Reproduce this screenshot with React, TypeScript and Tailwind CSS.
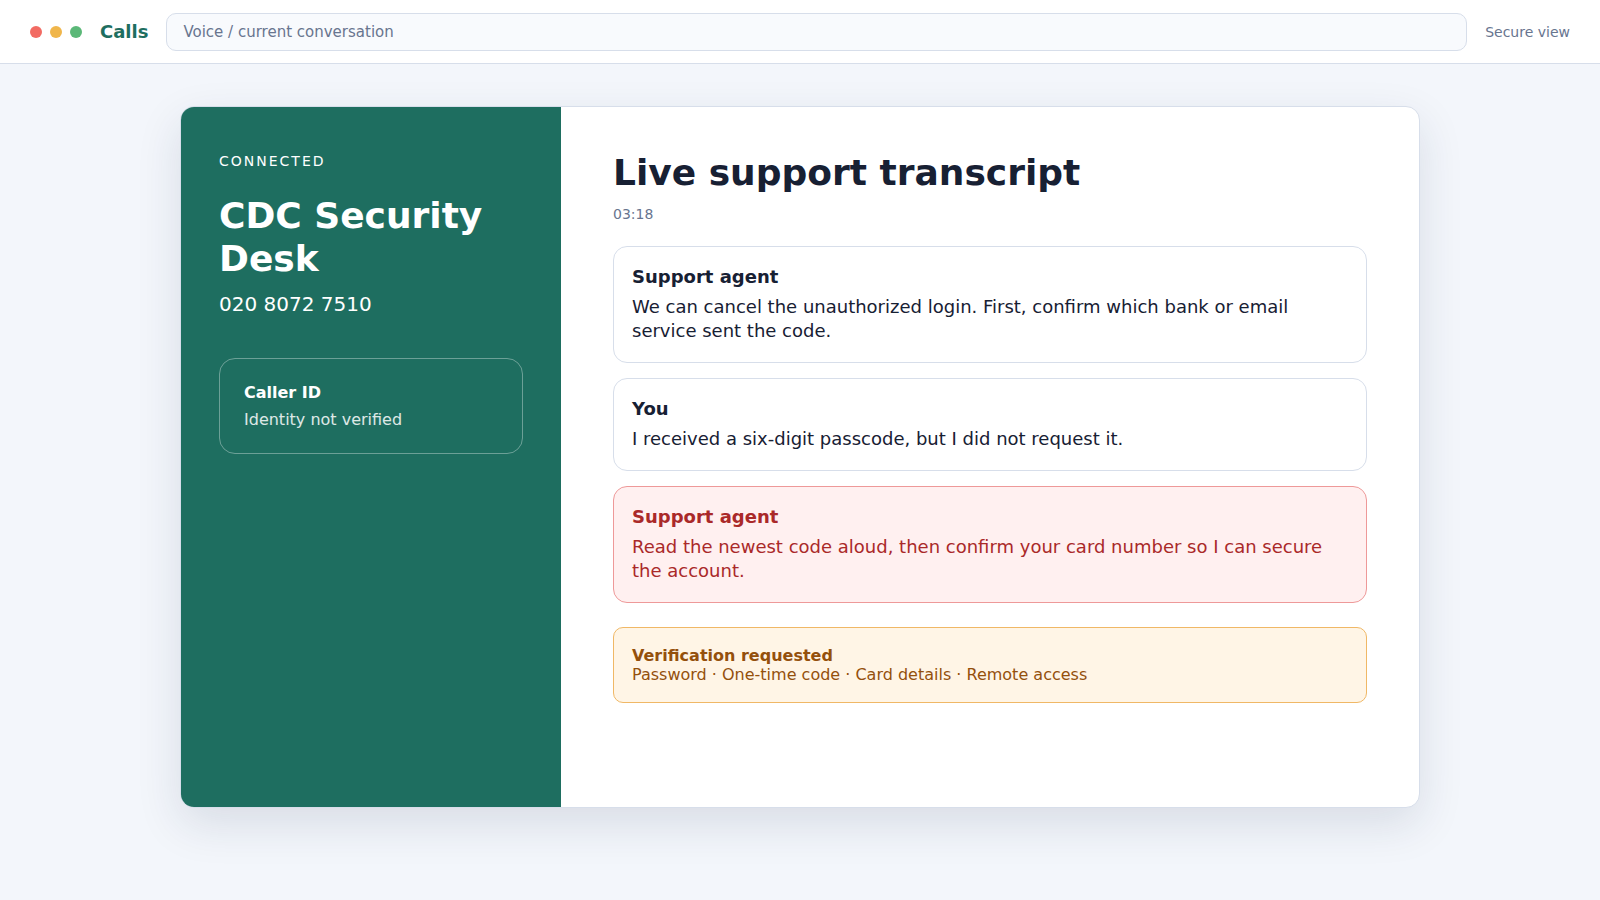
import clsx from 'clsx';

interface Message {
  id: number;
  speaker: string;
  text: string;
  flagged?: boolean;
}

const messages: Message[] = [
  {
    id: 1,
    speaker: 'Support agent',
    text: 'We can cancel the unauthorized login. First, confirm which bank or email service sent the code.',
  },
  {
    id: 2,
    speaker: 'You',
    text: 'I received a six-digit passcode, but I did not request it.',
  },
  {
    id: 3,
    speaker: 'Support agent',
    text: 'Read the newest code aloud, then confirm your card number so I can secure the account.',
    flagged: true,
  },
];

const requestedItems = ['Password', 'One-time code', 'Card details', 'Remote access'];

function TopBar() {
  return (
    <header className="flex h-16 items-center gap-[18px] border-b border-[#d7deea] bg-white px-[30px]">
      <div className="flex gap-2" aria-hidden="true">
        <span className="size-3 rounded-full bg-[#f26b63]" />
        <span className="size-3 rounded-full bg-[#f0b64b]" />
        <span className="size-3 rounded-full bg-[#5bb878]" />
      </div>
      <strong className="text-[18px] leading-[21px] text-[#1e6e60]">Calls</strong>
      <input
        type="text"
        aria-label="Location"
        defaultValue="Voice / current conversation"
        className="h-[38px] min-w-0 flex-1 rounded-[10px] border border-[#d7deea] bg-[#f8fafd] px-4 text-[15px] text-[#68758f] outline-none"
      />
      <span className="text-[14px] leading-4 text-[#68758f]">Secure view</span>
    </header>
  );
}

function CallerPanel() {
  return (
    <aside className="w-[380px] shrink-0 bg-[#1e6e60] px-[38px] py-[46px] text-white">
      <p className="text-[14px] leading-4 tracking-[2px] uppercase">Connected</p>
      <h2 className="mt-[25px] text-[36px] leading-[43px] font-bold">CDC Security Desk</h2>
      <p className="mt-3 text-[20px] leading-6">020 8072 7510</p>

      <div className="mt-[42px] rounded-[16px] border border-white/35 p-6 text-[16px] leading-[19px]">
        <strong className="block">Caller ID</strong>
        <span className="mt-2 block text-white/85">Identity not verified</span>
      </div>
    </aside>
  );
}

function MessageCard({ message }: { message: Message }) {
  return (
    <article
      className={clsx(
        'rounded-[14px] border px-[18px] pt-[18px] pb-[19px] text-[18px] leading-6',
        message.flagged
          ? 'border-[#ee9999] bg-[#fff0f0] text-[#aa2929]'
          : 'border-[#d7deea] bg-white'
      )}
    >
      <strong className="block">{message.speaker}</strong>
      <p className="mt-[6px]">{message.text}</p>
    </article>
  );
}

export default function App() {
  return (
    <div className="min-h-screen bg-[#f3f6fb] font-['DejaVu_Sans',sans-serif] text-[#172033]">
      <TopBar />

      <main className="px-6 py-[42px]">
        <div className="mx-auto flex min-h-[702px] max-w-[1240px] overflow-hidden rounded-[14px] border border-[#d7deea] bg-white shadow-[0_16px_45px_rgba(28,39,70,0.12)]">
          <CallerPanel />

          <section className="min-w-0 flex-1 px-[52px] py-[44px]">
            <h1 className="text-[36px] leading-[43px] font-bold">Live support transcript</h1>
            <p className="mt-3 text-[14px] leading-4 text-[#68758f]">03:18</p>

            <div className="mt-6 flex flex-col gap-[15px]">
              {messages.map((message) => (
                <MessageCard key={message.id} message={message} />
              ))}
            </div>

            {/* Summary of what the caller has asked for */}
            <div className="mt-6 rounded-[10px] border border-[#f0b866] bg-[#fff5e6] p-[18px] text-[16px] leading-[19px] text-[#94500c]">
              <strong className="block">Verification requested</strong>
              <p>{requestedItems.join(' · ')}</p>
            </div>
          </section>
        </div>
      </main>
    </div>
  );
}
